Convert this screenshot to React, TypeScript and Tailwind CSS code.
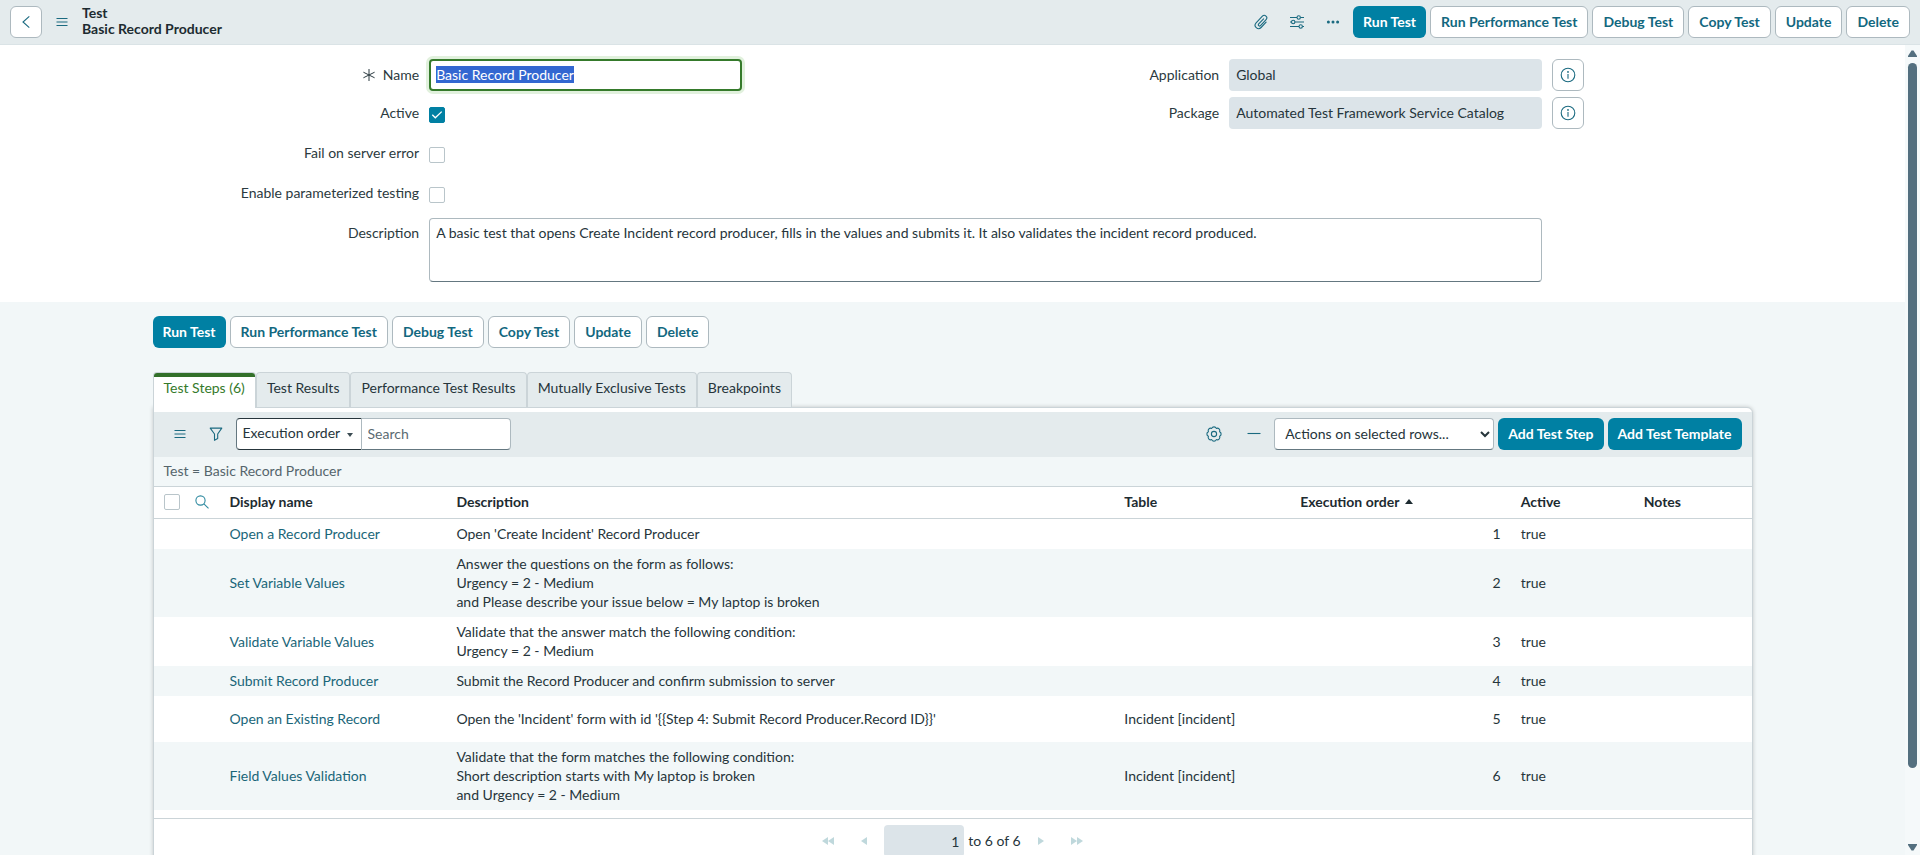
import { useEffect, useRef } from "react";
import type { ReactNode } from "react";

interface TestStep {
  name: string;
  description: string[];
  table?: string;
  order: number;
  tall?: boolean;
}

const ACTIONS = [
  "Run Test",
  "Run Performance Test",
  "Debug Test",
  "Copy Test",
  "Update",
  "Delete",
];

const TABS = [
  "Test Steps (6)",
  "Test Results",
  "Performance Test Results",
  "Mutually Exclusive Tests",
  "Breakpoints",
];

const STEPS: TestStep[] = [
  {
    name: "Open a Record Producer",
    description: ["Open 'Create Incident' Record Producer"],
    order: 1,
  },
  {
    name: "Set Variable Values",
    description: [
      "Answer the questions on the form as follows:",
      "Urgency = 2 - Medium",
      "and Please describe your issue below = My laptop is broken",
    ],
    order: 2,
  },
  {
    name: "Validate Variable Values",
    description: [
      "Validate that the answer match the following condition:",
      "Urgency = 2 - Medium",
    ],
    order: 3,
  },
  {
    name: "Submit Record Producer",
    description: ["Submit the Record Producer and confirm submission to server"],
    order: 4,
  },
  {
    name: "Open an Existing Record",
    description: [
      "Open the 'Incident' form with id '{{Step 4: Submit Record Producer.Record ID}}'",
    ],
    table: "Incident [incident]",
    order: 5,
    tall: true,
  },
  {
    name: "Field Values Validation",
    description: [
      "Validate that the form matches the following condition:",
      "Short description starts with My laptop is broken",
      "and Urgency = 2 - Medium",
    ],
    table: "Incident [incident]",
    order: 6,
  },
];

function MenuIcon() {
  return (
    <svg className="w-4 h-4" viewBox="0 0 16 16" fill="none" stroke="currentColor" strokeWidth="1.2">
      <path d="M2.5 4.5h11M2.5 8h11M2.5 11.5h11" />
    </svg>
  );
}

function ChevronLeftIcon() {
  return (
    <svg className="w-4 h-4" viewBox="0 0 16 16" fill="none" stroke="currentColor" strokeWidth="1.1">
      <path d="M11.3 2.3 5 8l6.3 5.7" />
    </svg>
  );
}

function PaperclipIcon() {
  return (
    <svg
      className="w-4 h-4"
      viewBox="0 0 16 16"
      fill="none"
      stroke="currentColor"
      strokeWidth="1.1"
      strokeLinecap="round"
    >
      <path d="M10.6 4.8 5.7 9.9a1.2 1.2 0 0 0 1.8 1.7l5.6-6a2.5 2.5 0 0 0-3.7-3.4L3.1 8.8a3.4 3.4 0 0 0 5 4.7l5-5.3" />
    </svg>
  );
}

function SlidersIcon() {
  return (
    <svg className="w-4 h-4" viewBox="0 0 16 16" fill="none" stroke="currentColor" strokeWidth="1.1">
      <path d="M1 3.5h7M11.5 3.5H15M1 8h1.5M6 8h9M1 12.5h9M13.5 12.5H15" />
      <circle cx="9.7" cy="3.5" r="1.7" />
      <circle cx="4.2" cy="8" r="1.7" />
      <circle cx="11.7" cy="12.5" r="1.7" />
    </svg>
  );
}

function DotsIcon() {
  return (
    <svg className="w-4 h-4" viewBox="0 0 16 16" fill="currentColor">
      <circle cx="3.4" cy="8" r="1.5" />
      <circle cx="8" cy="8" r="1.5" />
      <circle cx="12.6" cy="8" r="1.5" />
    </svg>
  );
}

function InfoIcon() {
  return (
    <svg className="w-4 h-4" viewBox="0 0 16 16" fill="none" stroke="currentColor" strokeWidth="1.1">
      <circle cx="8" cy="8" r="6.8" />
      <path d="M8 7v4.8" />
      <circle cx="8" cy="4.9" r="0.4" />
    </svg>
  );
}

function FilterIcon() {
  return (
    <svg
      className="w-4 h-4"
      viewBox="0 0 16 16"
      fill="none"
      stroke="currentColor"
      strokeWidth="1.1"
      strokeLinejoin="round"
    >
      <path d="M2.2 2.1h11.6L9.7 8v4.6l-3.2 1.7V8z" />
    </svg>
  );
}

function GearIcon() {
  return (
    <svg className="w-4 h-4" viewBox="0 0 16 16" fill="none" stroke="currentColor" strokeWidth="1.1">
      <circle cx="8" cy="8" r="2.6" />
      <path
        strokeLinejoin="round"
        d="M5.7 2.4a2.5 2.5 0 0 1 4.6 0 2.5 2.5 0 0 1 3.3 3.3 2.5 2.5 0 0 1 0 4.600 2.500 2.500 0 0 1-3.300 3.300 2.500 2.500 0 0 1-4.600 0 2.500 2.500 0 0 1-3.300-3.300 2.500 2.500 0 0 1 0-4.600 2.500 2.500 0 0 1 3.300-3.300z"
      />
    </svg>
  );
}

function MinusIcon() {
  return (
    <svg className="w-4 h-4" viewBox="0 0 16 16" fill="none" stroke="currentColor" strokeWidth="1.1">
      <path d="M1.5 7.5h13" />
    </svg>
  );
}

function SearchIcon() {
  return (
    <svg className="w-4 h-4" viewBox="0 0 16 16" fill="none" stroke="currentColor" strokeWidth="1.1">
      <circle cx="6.5" cy="6.5" r="4.6" />
      <path d="m9.9 9.9 4.6 4.4" />
    </svg>
  );
}

interface IconButtonProps {
  label: string;
  children: ReactNode;
  outlined?: boolean;
  disabled?: boolean;
}

function IconButton({ label, children, outlined, disabled }: IconButtonProps) {
  return (
    <button
      aria-label={label}
      disabled={disabled}
      className={`w-8 h-8 shrink-0 flex items-center justify-center rounded-md ${
        outlined ? "border border-[#adb9bf] bg-white" : ""
      } ${disabled ? "text-[#bfd8dc]" : "text-[#1a6a80]"}`}
    >
      {children}
    </button>
  );
}

function ActionButton({ label, primary }: { label: string; primary?: boolean }) {
  return (
    <button
      className={`h-8 px-[10px] pb-[2px] rounded-md font-bold whitespace-nowrap ${
        primary
          ? "bg-[#0080a3] text-white"
          : "border border-[#adb9bf] bg-white text-[#12687f]"
      }`}
    >
      {label}
    </button>
  );
}

function ActionBar() {
  return (
    <div className="flex gap-1">
      {ACTIONS.map((action, i) => (
        <ActionButton key={action} label={action} primary={i === 0} />
      ))}
    </div>
  );
}

function Header() {
  return (
    <header className="h-[45px] shrink-0 flex items-center gap-1 px-[10px] bg-[#e4ebed] border-b border-[#dae3e6]">
      <IconButton label="Back" outlined>
        <ChevronLeftIcon />
      </IconButton>
      <IconButton label="Additional actions">
        <MenuIcon />
      </IconButton>
      <h1 className="pb-[2px] font-bold leading-4 text-[#1d2b31]">
        Test
        <br />
        Basic Record Producer
      </h1>
      <div className="ml-auto flex items-center gap-1">
        <IconButton label="Manage attachments">
          <PaperclipIcon />
        </IconButton>
        <IconButton label="Personalize form">
          <SlidersIcon />
        </IconButton>
        <IconButton label="More options">
          <DotsIcon />
        </IconButton>
        <ActionBar />
      </div>
    </header>
  );
}

interface CheckboxProps {
  id: string;
  label: string;
  checked?: boolean;
}

function CheckboxRow({ id, label, checked }: CheckboxProps) {
  return (
    <div className="grid grid-cols-12 h-[34px]">
      <label htmlFor={id} className="col-span-4 text-right leading-[32px]">
        {label}
      </label>
      <div className="col-span-5 px-[10px] pt-[10px]">
        <span className="relative block w-4 h-4">
          <input
            id={id}
            type="checkbox"
            defaultChecked={checked}
            className="peer appearance-none block w-4 h-4 rounded-xs border border-[#b9c5ca] bg-white checked:border-[#0080a3] checked:bg-[#0080a3]"
          />
          <svg
            className="absolute inset-0 w-4 h-4 hidden peer-checked:block pointer-events-none"
            viewBox="0 0 16 16"
            fill="none"
            stroke="white"
            strokeWidth="1.3"
          >
            <path d="m3.3 7.8 3 3 6.4-6.2" />
          </svg>
        </span>
      </div>
    </div>
  );
}

function ReadonlyRow({ id, label, value }: { id: string; label: string; value: string }) {
  return (
    <div className="grid grid-cols-12">
      <label htmlFor={id} className="col-span-4 text-right leading-[32px]">
        {label}
      </label>
      <div className="col-span-5 px-[10px]">
        <input
          id={id}
          readOnly
          defaultValue={value}
          className="block w-full h-8 px-[7px] pb-[2px] rounded-sm bg-[#dce4e9] text-[#26353b] outline-none"
        />
      </div>
      <IconButton label={`Preview ${label}`} outlined>
        <InfoIcon />
      </IconButton>
    </div>
  );
}

function RecordForm() {
  const nameRef = useRef<HTMLInputElement>(null);

  useEffect(() => {
    nameRef.current?.focus();
    nameRef.current?.select();
  }, []);

  return (
    <form className="bg-white pt-[14px] pb-5 text-[#2b3a40]">
      <div className="max-w-[1600px] mx-auto">
        <div className="grid grid-cols-2">
          <div className="flex flex-col gap-[6px]">
            <div className="grid grid-cols-12">
              <label
                htmlFor="name"
                className="col-span-4 flex items-center justify-end gap-2 leading-[32px]"
              >
                <svg
                  className="w-3 h-3"
                  viewBox="0 0 12 12"
                  fill="none"
                  stroke="currentColor"
                  strokeWidth="1"
                >
                  <path d="M6 0v12M.4 3.2l11.2 5.6M.4 8.8l11.2-5.6" />
                </svg>
                Name
              </label>
              <div className="col-span-5 px-[10px]">
                <input
                  id="name"
                  ref={nameRef}
                  defaultValue="Basic Record Producer"
                  className="block w-full h-8 px-[5px] pb-[2px] rounded-sm border-2 border-[#357a2b] bg-white outline-none ring-3 ring-[#e1f1dd] selection:bg-[#3367d1] selection:text-white"
                />
              </div>
            </div>
            <CheckboxRow id="active" label="Active" checked />
            <CheckboxRow id="fail-on-error" label="Fail on server error" />
            <CheckboxRow id="parameterized" label="Enable parameterized testing" />
          </div>
          <div className="flex flex-col gap-[6px]">
            <ReadonlyRow id="application" label="Application" value="Global" />
            <ReadonlyRow
              id="package"
              label="Package"
              value="Automated Test Framework Service Catalog"
            />
          </div>
        </div>
        <div className="grid grid-cols-24 mt-[7px]">
          <label htmlFor="description" className="col-span-4 text-right leading-[30px]">
            Description
          </label>
          <div className="col-span-17 px-[10px]">
            <textarea
              id="description"
              defaultValue="A basic test that opens Create Incident record producer, fills in the values and submits it. It also validates the incident record produced."
              className="block w-full h-16 px-[6px] py-1 leading-[19px] resize-none rounded-sm border border-[#adb9bf] border-b-[#647780] bg-white text-[#26353b] outline-none"
            />
          </div>
        </div>
      </div>
    </form>
  );
}

function TabList() {
  return (
    <div role="tablist" className="flex">
      {TABS.map((tab, i) => (
        <button
          key={tab}
          role="tab"
          aria-selected={i === 0}
          className={`px-[10px] rounded-t-sm border-x border-t ${
            i === 0
              ? "relative z-10 h-9 -mb-px pb-[6px] overflow-hidden bg-white border-[#cbd4d8] text-[#357a2b]"
              : "h-[35px] pb-[6px] bg-[#e4ebed] border-[#cbd4d8] text-[#26353b]"
          }`}
        >
          {i === 0 && (
            <span className="absolute inset-x-0 top-0 h-1 bg-[#33702a]" />
          )}
          {tab}
        </button>
      ))}
    </div>
  );
}

function ListToolbar() {
  return (
    <div className="flex items-center gap-1 px-[10px] pt-[6px] pb-[7px] bg-[#e4ebed]">
      <IconButton label="List controls">
        <MenuIcon />
      </IconButton>
      <IconButton label="Show filter">
        <FilterIcon />
      </IconButton>
      <div className="flex">
        <div className="relative">
          <select
            aria-label="Search field"
            className="appearance-none h-8 w-[126px] pl-[6px] pb-[3px] rounded-l-sm border border-[#26353b] border-l-[#647780] border-r-[#adb9bf] bg-white text-[#26353b]"
          >
            <option>Execution order</option>
          </select>
          <svg
            className="absolute right-[9px] top-[15px] w-[6px] h-1 text-[#3c4c53] pointer-events-none"
            viewBox="0 0 6 4"
            fill="currentColor"
          >
            <path d="M0 0h6L3 4z" />
          </svg>
        </div>
        <input
          aria-label="Search"
          placeholder="Search"
          className="h-8 w-[149px] px-[6px] pb-[2px] rounded-r-sm border border-l-0 border-[#adb9bf] border-b-[#647780] bg-white placeholder:text-[#5b6b72]"
        />
      </div>
      <div className="ml-auto flex items-center gap-1">
        <IconButton label="Personalize list">
          <GearIcon />
        </IconButton>
        <span className="pl-1">
          <IconButton label="Collapse list">
            <MinusIcon />
          </IconButton>
        </span>
        <select
          aria-label="Actions on selected rows"
          className="h-8 w-[220px] pl-[6px] pb-[2px] rounded-sm border border-[#adb9bf] border-b-[#647780] bg-white text-[#26353b]"
        >
          <option>Actions on selected rows...</option>
        </select>
        <ActionButton label="Add Test Step" primary />
        <ActionButton label="Add Test Template" primary />
      </div>
    </div>
  );
}

function StepsTable() {
  return (
    <table className="w-full table-fixed text-left text-[#26353b]">
      <thead className="border-y border-[#cbd4d8] text-[#1d2b31]">
        <tr className="h-8 *:pb-[2px]">
          <th className="w-9 pl-[10px]">
            <input
              type="checkbox"
              aria-label="Select all rows"
              className="appearance-none block w-4 h-4 rounded-xs border border-[#b9c5ca] bg-white"
            />
          </th>
          <th className="w-[30px] pl-1">
            <button aria-label="Search columns" className="block text-[#2f8aa0]">
              <SearchIcon />
            </button>
          </th>
          <th className="w-[14.2%] px-[10px]">Display name</th>
          <th className="w-[41.8%] px-[10px]">Description</th>
          <th className="w-[11%] px-[10px]">Table</th>
          <th className="w-[13.8%] px-[10px]">
            <span className="flex items-center gap-[6px]">
              Execution order
              <svg className="w-2 h-[5px]" viewBox="0 0 8 5" fill="currentColor">
                <path d="M0 5h8L4 0z" />
              </svg>
            </span>
          </th>
          <th className="w-[7.7%] px-[10px]">Active</th>
          <th className="px-[10px]">Notes</th>
        </tr>
      </thead>
      <tbody>
        {STEPS.map((step) => (
          <tr
            key={step.order}
            className={`even:bg-[#f2f7f8] *:px-[10px] *:pt-[5px] *:pb-[6px] leading-[19px] ${
              step.tall ? "h-[46px]" : ""
            }`}
          >
            <td />
            <td />
            <td>
              <a href="#" className="text-[#1a6679]">
                {step.name}
              </a>
            </td>
            <td>
              {step.description.map((line) => (
                <div key={line}>{line}</div>
              ))}
            </td>
            <td>{step.table}</td>
            <td className="text-right">{step.order}</td>
            <td>true</td>
            <td />
          </tr>
        ))}
      </tbody>
    </table>
  );
}

function Pager() {
  return (
    <div className="mt-2 pt-[6px] pb-[10px] flex items-center justify-center gap-1 border-t border-[#cbd4d8] text-[#26353b]">
      <IconButton label="First page" disabled>
        <svg className="w-3 h-2" viewBox="0 0 12 8" fill="currentColor">
          <path d="M6 0v8L0 4zM12 0v8L6 4z" />
        </svg>
      </IconButton>
      <IconButton label="Previous page" disabled>
        <svg className="w-[6px] h-2" viewBox="0 0 6 8" fill="currentColor">
          <path d="M6 0v8L0 4z" />
        </svg>
      </IconButton>
      <input
        aria-label="Skip to row"
        readOnly
        defaultValue="1"
        className="h-8 w-20 px-[5px] rounded-sm bg-[#dce4e9] text-right"
      />
      <span className="pb-[2px]">to 6 of 6</span>
      <IconButton label="Next page" disabled>
        <svg className="w-[6px] h-2" viewBox="0 0 6 8" fill="currentColor">
          <path d="M0 0v8l6-4z" />
        </svg>
      </IconButton>
      <IconButton label="Last page" disabled>
        <svg className="w-3 h-2" viewBox="0 0 12 8" fill="currentColor">
          <path d="M0 0v8l6-4zM6 0v8l6-4z" />
        </svg>
      </IconButton>
    </div>
  );
}

function Scrollbar() {
  return (
    <div
      aria-hidden="true"
      className="w-[15px] shrink-0 flex flex-col items-center gap-[6px] pt-[5px] pb-1 bg-[#f5f9fa] text-[#536f7f]"
    >
      <svg className="w-[9px] h-[7px] shrink-0" viewBox="0 0 9 7" fill="currentColor">
        <path d="M0 7h9V6L5.5.5h-2L0 6z" />
      </svg>
      <div className="flex-1 w-[9px]">
        <div className="h-[91%] rounded-full bg-[#536f7f]" />
      </div>
      <svg className="w-[9px] h-[7px] shrink-0" viewBox="0 0 9 7" fill="currentColor">
        <path d="M0 0h9v1L5.5 6.5h-2L0 1z" />
      </svg>
    </div>
  );
}

export default function App() {
  return (
    <div className="h-screen flex flex-col overflow-hidden bg-[#f2f7f8] font-[Lato,sans-serif] text-[14px] leading-[19px]">
      <Header />
      <div className="flex-1 min-h-0 flex">
        <main className="flex-1 min-w-0 overflow-y-auto [scrollbar-width:none]">
          <RecordForm />
          <div className="max-w-[1600px] mx-auto pt-[14px] pb-5">
            <ActionBar />
            <div className="mt-6">
              <TabList />
              <section className="border border-[#cbd4d8] rounded-tr-md bg-white pt-1 shadow-[0_0_4px_rgba(0,0,0,0.2)]">
                <ListToolbar />
                <div className="px-[10px] pt-[4px] pb-[6px] bg-[#f2f7f8] text-[#55656c]">
                  Test = Basic Record Producer
                </div>
                <StepsTable />
                <Pager />
              </section>
            </div>
          </div>
        </main>
        <Scrollbar />
      </div>
    </div>
  );
}
